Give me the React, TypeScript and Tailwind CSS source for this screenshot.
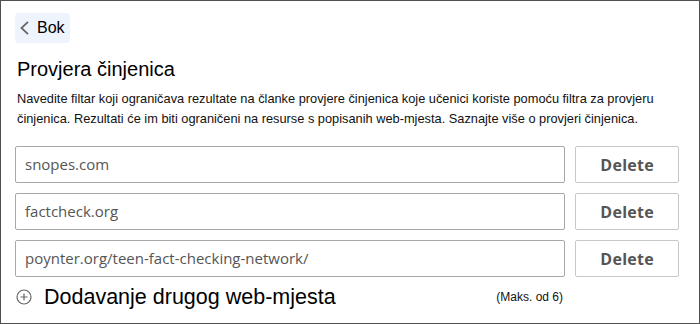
const sites = ['snopes.com', 'factcheck.org', 'poynter.org/teen-fact-checking-network/'];

export default function App() {
  return (
    <div className="w-[700px] h-[324px] bg-white border border-[#505050] overflow-hidden font-['Liberation_Sans',Arial,sans-serif] text-black">
      <div className="pl-[14px] pr-[20px] pt-[12px]">
        {/* back */}
        <button className="h-[30px] w-[55px] rounded-[4px] bg-[#eef4fb] flex items-center pl-[5px] gap-[8px]">
          <svg width="9" height="14" viewBox="0 0 9 14" className="text-[#666]">
            <path d="M8 0.8 1.5 7 8 13.2" fill="none" stroke="currentColor" strokeWidth="1.8" />
          </svg>
          <span className="text-[16px] leading-none">Bok</span>
        </button>

        <h1 className="mt-[14px] pl-[2px] text-[20px] leading-[24px]">Provjera činjenica</h1>

        <p className="mt-[8px] pl-[2px] text-[12.8px] leading-[20px] text-[#111]">
          Navedite filtar koji ograničava rezultate na članke provjere činjenica koje učenici koriste pomoću filtra za provjeru
          činjenica. Rezultati će im biti ograničeni na resurse s popisanih web-mjesta. Saznajte više o provjeri činjenica.
        </p>

        <div className="mt-[17px] flex flex-col gap-[10px]">
          {sites.map((s) => (
            <div key={s} className="flex items-center gap-[10px]">
              <div className="w-[552px] h-[37px] border border-[#a8a8a8] rounded-[2px] flex items-center px-[9px] text-[15px] text-[#555] font-['Open_Sans',sans-serif]">
                {s}
              </div>
              <button className="w-[104px] h-[37px] border border-[#c8c8c8] rounded-[2px] text-[16px] tracking-[0.3px] font-bold text-[#555] font-['Open_Sans',sans-serif]">
                Delete
              </button>
            </div>
          ))}
        </div>

        <div className="mt-[6px] flex items-center">
          <svg width="16" height="16" viewBox="0 0 16 16" className="ml-[1px] text-[#666]">
            <circle cx="8" cy="8" r="7" fill="none" stroke="currentColor" strokeWidth="1.2" />
            <path d="M8 4.5v7M4.5 8h7" stroke="currentColor" strokeWidth="1.2" />
          </svg>
          <span className="ml-[12px] text-[21.5px] leading-[28px]">Dodavanje drugog web-mjesta</span>
          <span className="ml-auto mr-[116px] text-[12px] text-[#111]">(Maks. od 6)</span>
        </div>
      </div>
    </div>
  );
}
